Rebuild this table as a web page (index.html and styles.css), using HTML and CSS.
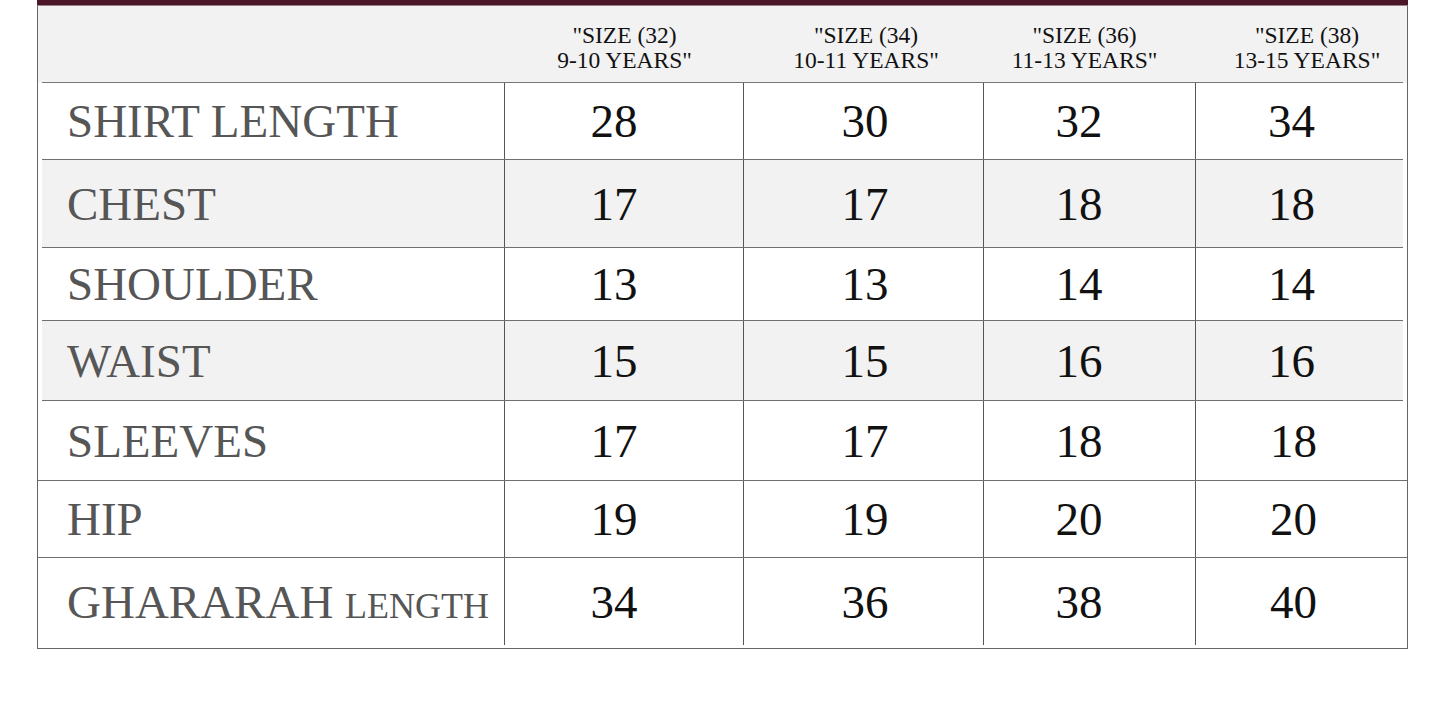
FILE: index.html
```html
<!DOCTYPE html>
<html lang="en">
<head>
<meta charset="utf-8">
<title>Size Chart</title>
<link rel="stylesheet" href="styles.css">
</head>
<body>
<div class="chart">
  <div class="bar"></div>
  <div class="head">
    <div class="head-grid">
      <div class="hcell"></div>
      <div class="hcell h1">"SIZE (32)<br>9-10 YEARS"</div>
      <div class="hcell h2">"SIZE (34)<br>10-11 YEARS"</div>
      <div class="hcell h3">"SIZE (36)<br>11-13 YEARS"</div>
      <div class="hcell h4">"SIZE (38)<br>13-15 YEARS"</div>
    </div>
  </div>

  <div class="row inset r-shirt">
    <div class="label"><span>SHIRT LENGTH</span></div>
    <div class="cell c1">28</div><div class="cell c2">30</div><div class="cell c3">32</div><div class="cell c4">34</div>
  </div>
  <div class="row inset shade r-chest">
    <div class="label"><span>CHEST</span></div>
    <div class="cell c1">17</div><div class="cell c2">17</div><div class="cell c3">18</div><div class="cell c4">18</div>
  </div>
  <div class="row inset r-shoulder">
    <div class="label"><span>SHOULDER</span></div>
    <div class="cell c1">13</div><div class="cell c2">13</div><div class="cell c3">14</div><div class="cell c4">14</div>
  </div>
  <div class="row inset shade r-waist">
    <div class="label"><span>WAIST</span></div>
    <div class="cell c1">15</div><div class="cell c2">15</div><div class="cell c3">16</div><div class="cell c4">16</div>
  </div>
  <div class="row r-sleeves">
    <div class="label"><span>SLEEVES</span></div>
    <div class="cell c1">17</div><div class="cell c2">17</div><div class="cell c3">18</div><div class="cell c4">18</div>
  </div>
  <div class="row r-hip">
    <div class="label"><span>HIP</span></div>
    <div class="cell c1">19</div><div class="cell c2">19</div><div class="cell c3">20</div><div class="cell c4">20</div>
  </div>
  <div class="row last r-gharara">
    <div class="label"><span>GHARARAH <span class="small">LENGTH</span></span></div>
    <div class="cell c1">34</div><div class="cell c2">36</div><div class="cell c3">38</div><div class="cell c4">40</div>
  </div>
</div>
</body>
</html>
```

FILE: styles.css
```css
html, body {
  margin: 0;
  padding: 0;
  background: #ffffff;
}

body {
  font-family: "Liberation Serif", "Times New Roman", serif;
}

.chart {
  margin-left: 37px;
  width: 1371px;
  box-sizing: border-box;
  border: 1px solid #666666;
  border-top: 0;
}

.bar {
  height: 5px;
  margin: 0 -1px;
  background: #4b1627;
  border-bottom: 1px solid #9d8189;
}

.head {
  background: #f2f2f2;
}

.head-grid {
  margin: 0 4px;
  height: 76px;
  border-bottom: 1px solid #767676;
  display: grid;
  grid-template-columns: 462px 239px 240px 212px 1fr;
}

.hcell {
  padding-top: 17px;
  font-size: 23.5px;
  line-height: 25px;
  color: #111111;
  text-align: center;
}

.h1 { padding-left: 2px; }
.h2 { padding-left: 6px; }
.h3 { padding-right: 9px; }
.h4 { padding-left: 16px; }

.row {
  display: grid;
  grid-template-columns: 466px 239px 240px 212px 1fr;
  border-bottom: 1px solid #707070;
  background: #ffffff;
}

.row.inset {
  margin: 0 4px;
  grid-template-columns: 462px 239px 240px 212px 1fr;
}

.row.shade {
  background: #f2f2f2;
}

.row.last {
  border-bottom: 0;
  padding-bottom: 3px;
}

.r-shirt { height: 76px; }
.r-chest { height: 87px; }
.r-shoulder { height: 72px; }
.r-waist { height: 79px; }
.r-sleeves { height: 79px; }
.r-hip { height: 76px; }
.r-gharara { height: 87px; }

.label {
  display: flex;
  align-items: center;
  padding-left: 29px;
  font-size: 47px;
  color: #565656;
  white-space: nowrap;
}

.row.inset .label {
  padding-left: 25px;
}

.label .small {
  font-size: 36px;
}

.cell {
  display: flex;
  align-items: center;
  justify-content: center;
  border-left: 1px solid #555555;
  font-size: 47px;
  color: #111111;
}

.c1 { padding-right: 20px; }
.c2 { padding-left: 3px; }
.c3 { padding-right: 21px; }
.c4 { padding-right: 16px; }
```
